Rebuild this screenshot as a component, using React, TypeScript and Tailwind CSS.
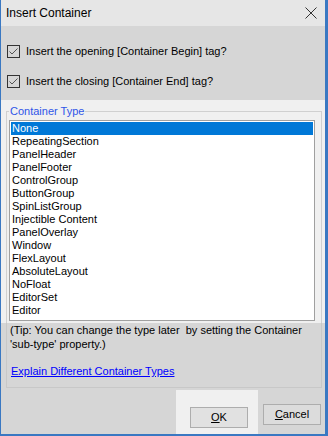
import React from 'react';

const items = [
  'None',
  'RepeatingSection',
  'PanelHeader',
  'PanelFooter',
  'ControlGroup',
  'ButtonGroup',
  'SpinListGroup',
  'Injectible Content',
  'PanelOverlay',
  'Window',
  'FlexLayout',
  'AbsoluteLayout',
  'NoFloat',
  'EditorSet',
  'Editor',
];

const CheckRow = ({ label }: { label: string }) => (
  <div className="flex items-center h-[13px] ml-[6px]">
    <div className="w-[13px] h-[13px] border border-[#333333] flex items-center justify-center shrink-0">
      <svg width="11" height="11" viewBox="0 0 11 11" fill="none" stroke="#555555" strokeWidth="1">
        <polyline points="1.5 5.5 4 8 9.5 2.5" />
      </svg>
    </div>
    <span className="ml-[6px] text-[11px] leading-[13px] text-black whitespace-nowrap">{label}</span>
  </div>
);

export default function App() {
  const [selected, setSelected] = React.useState(0);

  return (
    <div className="w-[328px] h-[436px] flex flex-col border-l border-r-[3px] border-b-2 border-[#3a78c2] bg-[#d6d6d6] font-['Liberation_Sans',Arial,sans-serif] text-black select-none overflow-hidden">
      {/* title bar */}
      <div className="h-[26px] shrink-0 bg-[#e6e6e6] flex items-center justify-between pl-[5px] pr-[8px]">
        <span className="text-[12px] leading-[14px]">Insert Container</span>
        <svg width="12" height="12" viewBox="0 0 12 12" fill="none" stroke="#333333" strokeWidth="1">
          <line x1="0.5" y1="0.5" x2="11.5" y2="11.5" />
          <line x1="11.5" y1="0.5" x2="0.5" y2="11.5" />
        </svg>
      </div>

      {/* checkboxes */}
      <div className="h-[74px] shrink-0 flex flex-col gap-[17px] pt-[19px]">
        <CheckRow label="Insert the opening [Container Begin] tag?" />
        <CheckRow label="Insert the closing [Container End] tag?" />
      </div>

      {/* group box, upper part */}
      <div className="h-[223px] shrink-0 bg-[#f0f0f0] pt-[11px] pl-[5px] pr-[3px]">
        <div className="h-[212px] border-t border-x border-[#d0d0d0] flex flex-col">
          <span className="self-start -mt-[7px] ml-[2px] px-[1px] bg-[#f0f0f0] text-[11px] leading-[13px] text-[#2f55e8]">
            Container Type
          </span>
          <div className="mt-[2px] ml-[2px] mr-[6px] h-[201px] border border-[#a0a0a0] bg-white p-[1px]">
            {items.map((it, i) => (
              <div
                key={it}
                onClick={() => setSelected(i)}
                className={`h-[13px] pl-[1px] text-[11px] leading-[13px] whitespace-nowrap ${
                  i === selected ? 'bg-[#0078d7] text-white' : 'text-black'
                }`}
              >
                {it}
              </div>
            ))}
          </div>
        </div>
      </div>

      {/* group box, lower part + buttons */}
      <div className="flex-1 flex flex-col">
        <div className="h-[65px] ml-[5px] mr-[3px] border-x border-b border-[#c8c8c8] flex flex-col">
          <p className="pl-[3px] text-[11px] leading-[14px] whitespace-pre-wrap">
            {'(Tip: You can change the type later  by setting the Container'}
            <br />
            {"'sub-type' property.)"}
          </p>
          <a href="#" className="self-start mt-[14px] ml-[4px] text-[11px] leading-[13px] text-[#0000ff] underline">
            Explain Different Container Types
          </a>
        </div>

        <div className="mt-[2px] flex-1 flex justify-end items-start pr-[4px]">
          <div className="w-[82px] h-full bg-[#f0f0f0] pl-[14px] pt-[14px]">
            <button className="w-[58px] h-[21px] border border-[#adadad] bg-[#e1e1e1] text-[11px] leading-[13px]">
              <span className="underline">O</span>K
            </button>
          </div>
          <button className="ml-[5px] mt-[14px] w-[58px] h-[21px] border border-[#adadad] bg-[#dcdcdc] text-[11px] leading-[13px]">
            <span className="underline">C</span>ancel
          </button>
        </div>
      </div>
    </div>
  );
}
